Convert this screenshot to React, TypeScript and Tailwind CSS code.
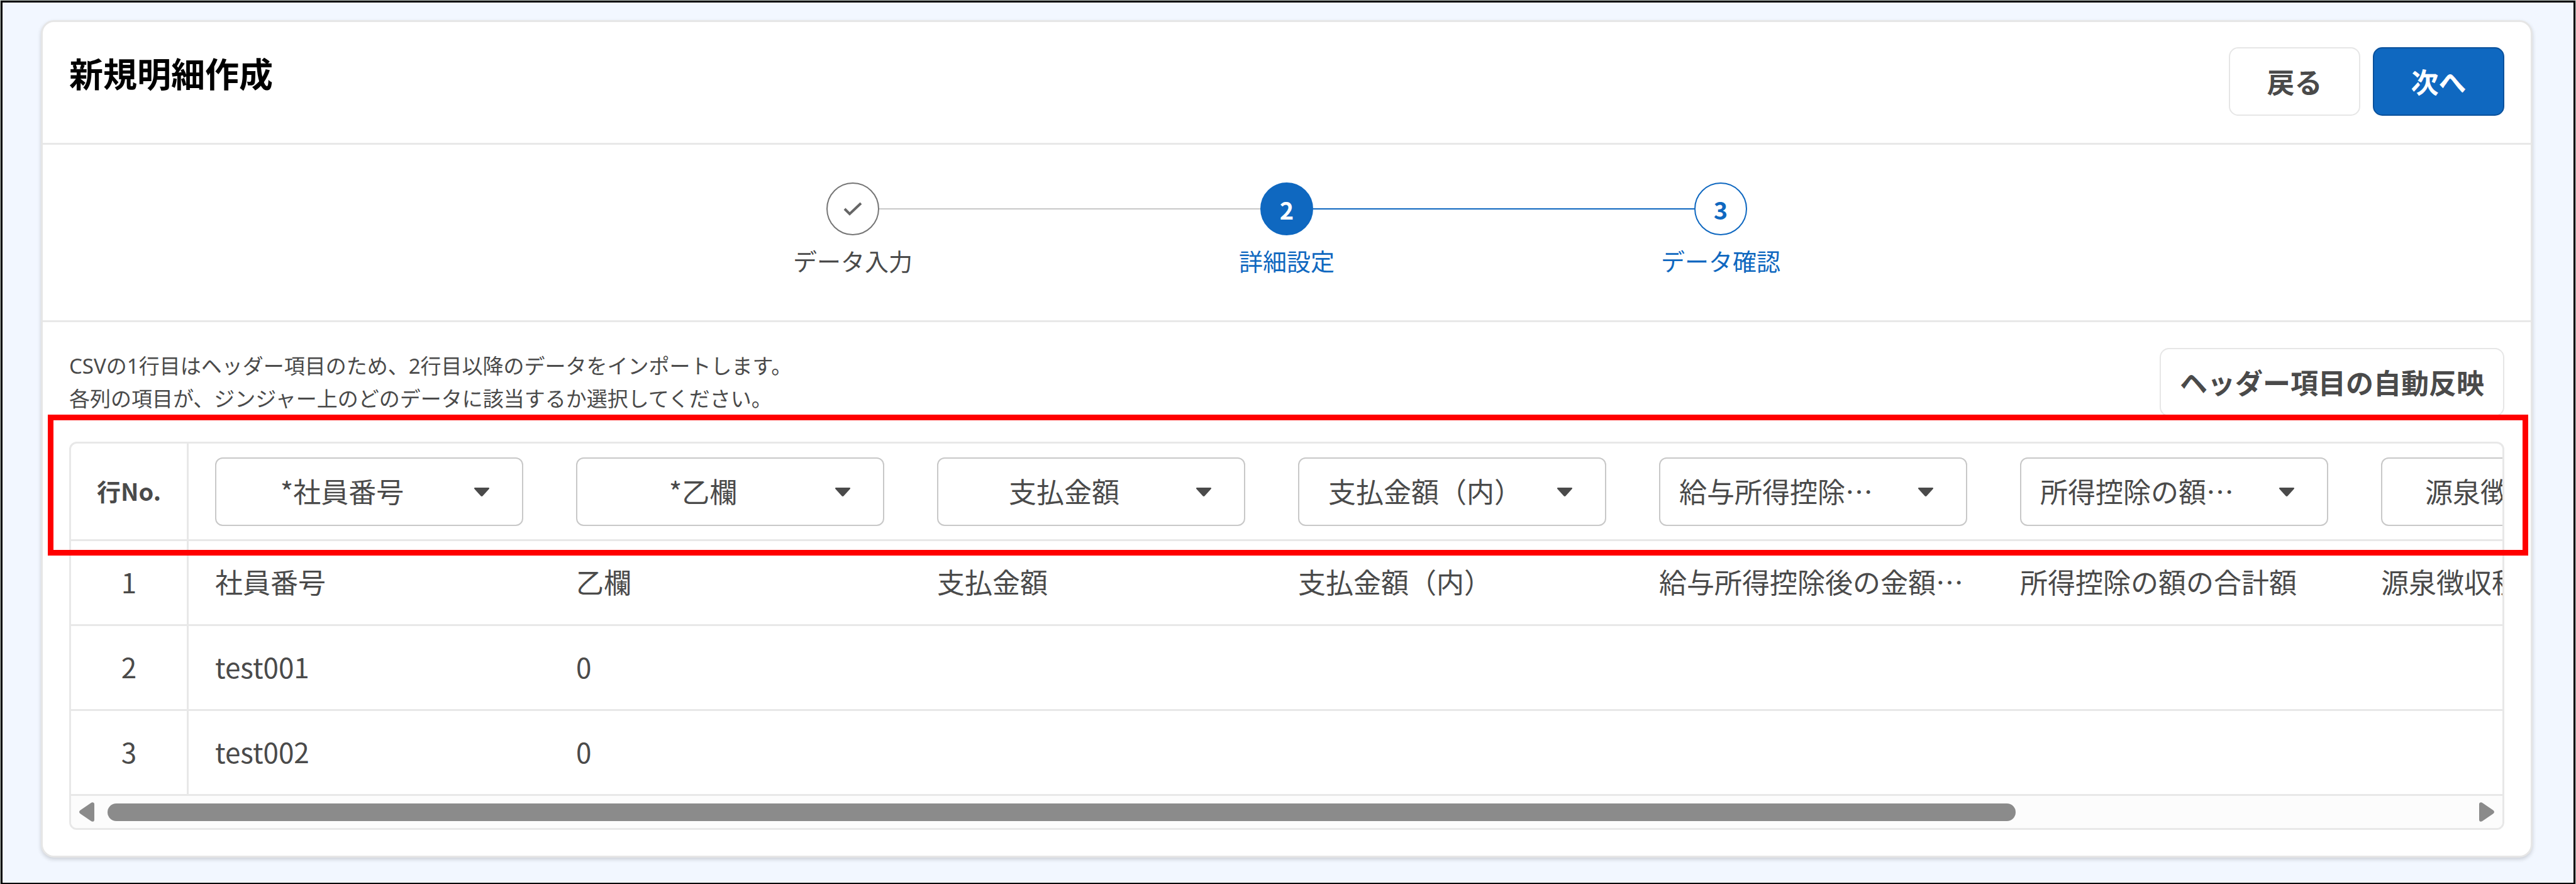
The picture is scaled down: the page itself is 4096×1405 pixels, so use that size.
import React from 'react'

const steps = [
    { label: 'データ入力', state: 'done' },
    { label: '詳細設定', state: 'current' },
    { label: 'データ確認', state: 'next' },
]

const columns = [
    '*社員番号',
    '*乙欄',
    '支払金額',
    '支払金額（内）',
    '給与所得控除後の金額',
    '所得控除の額の合計額',
    '源泉徴収税額',
]

const rows = [
    ['社員番号', '乙欄', '支払金額', '支払金額（内）', '給与所得控除後の金額…', '所得控除の額の合計額', '源泉徴収税額'],
    ['test001', '0', '', '', '', '', ''],
    ['test002', '0', '', '', '', '', ''],
]

const circleStyles: Record<string, string> = {
    done: 'border-[#757575] bg-white text-[#666666]',
    current: 'border-[#0f68c0] bg-[#0f68c0] text-white',
    next: 'border-[#0f68c0] bg-white text-[#0f68c0]',
}

const Header = () => {
    return (
        <header className="flex items-start justify-between border-b-3 border-[#e8e8e8] px-[42px] pt-[40px] pb-[43px]">
            <h1 className="text-[54px] leading-[82px] font-bold text-black">新規明細作成</h1>
            <div className="flex gap-5">
                <button type="button" className="h-[109px] w-[209px] rounded-[15px] border-2 border-[#e6e6e6] bg-white pb-[2px] text-[44px] font-bold">
                    戻る
                </button>
                <button type="button" className="h-[109px] w-[209px] rounded-[15px] border-2 border-[#0a519c] bg-[#0f68c0] pb-[2px] text-[44px] font-bold text-white">
                    次へ
                </button>
            </div>
        </header>
    )
}

const Stepper = () => {
    return (
        <ol className="flex justify-center border-b-3 border-[#e8e8e8] pt-[60px] pb-[68px]">
            {steps.map((step, i) => (
                <li key={step.label} className="flex w-[690px] flex-col items-center">
                    <div className="flex w-full items-center">
                        <div className={i === 0 ? 'h-[2px] flex-1' : i === 1 ? 'h-[2px] flex-1 bg-[#c8c8c8]' : 'h-[2px] flex-1 bg-[#0f68c0]'}></div>
                        <div className={`flex size-[84px] items-center justify-center rounded-full border-2 text-[38px] font-bold ${circleStyles[step.state]}`}>
                            {step.state === 'done' ? (
                                <svg width="30" height="22" viewBox="0 0 30 22" fill="none" stroke="currentColor" strokeWidth="4">
                                    <path d="M2 11l8 8L28 2" />
                                </svg>
                            ) : (
                                i + 1
                            )}
                        </div>
                        <div className={i === 0 ? 'h-[2px] flex-1 bg-[#c8c8c8]' : i === 1 ? 'h-[2px] flex-1 bg-[#0f68c0]' : 'h-[2px] flex-1'}></div>
                    </div>
                    <span className={step.state === 'done' ? 'mt-[13px] text-[38px] leading-[54px]' : 'mt-[13px] text-[38px] leading-[54px] text-[#0f68c0]'}>
                        {step.label}
                    </span>
                </li>
            ))}
        </ol>
    )
}

const ColumnSelect = ({ value, index }: { value: string; index: number }) => {
    return (
        <div className="relative">
            <select
                aria-label={`${index + 1}列目の項目`}
                defaultValue={value}
                className="block h-[109px] w-full appearance-none overflow-hidden rounded-[12px] border-2 border-[#c8c8c8] bg-white pr-[116px] pb-[3px] pl-[30px] text-[44px] font-normal text-ellipsis whitespace-nowrap [text-align-last:center]"
            >
                {columns.map((c) => (
                    <option key={c}>{c}</option>
                ))}
            </select>
            <svg className="pointer-events-none absolute top-1/2 right-[53px] -translate-y-1/2" width="26" height="14" viewBox="0 0 26 14" fill="#4a4a4a">
                <path d="M2.5 0h21c1.5 0 2 1.300 1 2.300L14.500 13.200c-.9.900-2.100.9-3 0L1.500 2.300C.5 1.300 1 0 2.500 0z" />
            </svg>
        </div>
    )
}

const DataTable = () => {
    return (
        <div className="relative mt-10">
            <div className="overflow-hidden rounded-[12px] border-3 border-[#e8e8e8]">
                <div className="overflow-hidden">
                    <table className="w-[4205px] table-fixed border-separate border-spacing-0 text-[44px]">
                        <colgroup>
                            <col className="w-[187px]" />
                            {columns.map((c) => (
                                <col key={c} className="w-[574px]" />
                            ))}
                        </colgroup>
                        <thead>
                            <tr>
                                <th className="border-r-3 border-b-3 border-[#e8e8e8] px-0 pt-0 pb-1 text-[38px] font-bold">行No.</th>
                                {columns.map((c, i) => (
                                    <th key={c} className="border-b-3 border-[#e8e8e8] px-[42px] pt-[22px] pb-[21px]">
                                        <ColumnSelect value={c} index={i} />
                                    </th>
                                ))}
                            </tr>
                        </thead>
                        <tbody>
                            {rows.map((row, i) => (
                                <tr key={i} className="h-[135px]">
                                    <td className="border-r-3 border-b-3 border-[#e8e8e8] px-0 pt-0 pb-1 text-center">{i + 1}</td>
                                    {row.map((cell, j) => (
                                        <td key={j} className="truncate border-b-3 border-[#e8e8e8] px-[42px] pt-0 pb-1">
                                            {cell}
                                        </td>
                                    ))}
                                </tr>
                            ))}
                        </tbody>
                    </table>
                </div>
                {/* Scrollbar */}
                <div className="flex h-[51px] items-center gap-[21px] bg-[#fcfcfc] px-[13px]">
                    <svg width="24" height="31" viewBox="0 0 24 31" fill="#8b8b8b">
                        <path d="M18.500 1.200C20.500-.7 24 0 24 3v25c0 3-3.500 3.700-5.500 1.800L2 18.500c-2.600-2-2.600-4 0-6z" />
                    </svg>
                    <div className="flex-1">
                        <div className="h-7 w-[80.9%] rounded-full bg-[#8b8b8b]"></div>
                    </div>
                    <svg width="24" height="31" viewBox="0 0 24 31" fill="#8b8b8b">
                        <path d="M5.500 1.200C3.500-.7 0 0 0 3v25c0 3 3.500 3.700 5.500 1.800L22 18.500c2.600-2 2.600-4 0-6z" />
                    </svg>
                </div>
            </div>
            {/* Highlight around the header row */}
            <div className="pointer-events-none absolute -top-[43px] -right-[38px] -left-[34px] h-[224px] border-9 border-[#ff0000]"></div>
        </div>
    )
}

const App = () => {
    return (
        <div lang="ja" className="min-h-screen bg-[#c4ccc8] p-px font-['Noto_Sans_CJK_JP',sans-serif] text-[#4a4a4a] flex flex-col">
            <div className="flex-1 border-3 border-black bg-[#f2f7ff] pt-7 pr-[65px] pb-10 pl-[61px]">
                <main className="rounded-[21px] border-3 border-[#e6e6e6] bg-white shadow-[0_3px_6px_rgba(0,0,0,0.16)]">
                    <Header />
                    <Stepper />
                    <section className="px-[42px] pt-[41px] pb-[41px]">
                        <div className="flex items-end justify-between">
                            <p className="pb-[2px] font-['Noto_Sans','Noto_Sans_CJK_JP',sans-serif] text-[33px] leading-[52px]">
                                CSVの1行目はヘッダー項目のため、2行目以降のデータをインポートします。
                                <br />
                                各列の項目が、ジンジャー上のどのデータに該当するか選択してください。
                            </p>
                            <button type="button" className="h-[109px] rounded-[15px] border-2 border-[#e6e6e6] bg-white px-[30px] pb-[2px] text-[44px] font-bold">
                                ヘッダー項目の自動反映
                            </button>
                        </div>
                        <DataTable />
                    </section>
                </main>
            </div>
        </div>
    )
}

export default App
